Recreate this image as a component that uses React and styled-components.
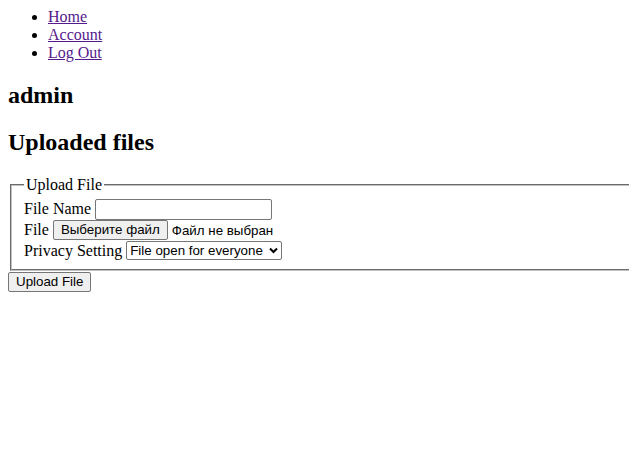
import React from 'react';
import styled, { createGlobalStyle } from 'styled-components';

const GlobalStyle = createGlobalStyle`
  html {
    overflow-x: clip;
  }
  body {
    margin: 8px;
    font-family: "Liberation Serif", "Times New Roman", serif;
    font-size: 16px;
    color: #000;
    background: #fff;
  }
`;

const NavList = styled.ul`
  margin: 0 0 16px;
  padding-left: 40px;
  list-style: disc;
`;

const NavLink = styled.a`
  color: #551a8b;
  text-decoration: underline;
`;

const Heading = styled.h2`
  font-size: 24px;
  margin: 19.92px 0;
`;

const FieldSet = styled.fieldset`
  margin: 0 -16px 0 2px;
  padding: 0.3em 0.75em 8px;
  border: 2px groove #c0c0c0;
`;

const Legend = styled.legend`
  padding: 0 2px;
`;

const Row = styled.div`
  display: flex;
  align-items: center;
  gap: 4px;
  height: ${(p) => p.$h || 21}px;
`;

const TextInput = styled.input`
  width: 177px;
  height: 21px;
  box-sizing: border-box;
  padding: 1px 2px;
  border: 1px solid #767676;
  border-radius: 2px;
  font-family: "Liberation Sans", Arial, sans-serif;
  font-size: 13.33px;
`;

const Button = styled.button`
  height: 20px;
  box-sizing: border-box;
  padding: 1px 7px;
  border: 1px solid #767676;
  border-radius: 2px;
  background: #efefef;
  color: #000;
  font-family: "Liberation Sans", Arial, sans-serif;
  font-size: 13.33px;
  line-height: 16px;
`;

const FileNote = styled.span`
  font-family: "Liberation Sans", Arial, sans-serif;
  font-size: 13.33px;
`;

const SelectWrap = styled.span`
  position: relative;
  display: inline-flex;
`;

const Select = styled.select`
  appearance: none;
  height: 19px;
  box-sizing: border-box;
  padding: 0 18px 0 3px;
  border: 1px solid #767676;
  border-radius: 2px;
  background: #fff;
  color: #000;
  font-family: "Liberation Sans", Arial, sans-serif;
  font-size: 13.33px;
`;

const Chevron = styled.svg`
  position: absolute;
  right: 4px;
  top: 6px;
  pointer-events: none;
`;

const SubmitButton = styled(Button)`
  display: block;
  margin-top: 1px;
`;

export default function App() {
  return (
    <>
      <GlobalStyle />
      <NavList>
        <li><NavLink href="#">Home</NavLink></li>
        <li><NavLink href="#">Account</NavLink></li>
        <li><NavLink href="#">Log Out</NavLink></li>
      </NavList>
      <Heading>admin</Heading>
      <Heading>Uploaded files</Heading>
      <form onSubmit={(e) => e.preventDefault()}>
        <FieldSet>
          <Legend>Upload File</Legend>
          <Row>
            File Name <TextInput type="text" />
          </Row>
          <Row>
            File <Button type="button">Выберите файл</Button>
            <FileNote>Файл не выбран</FileNote>
          </Row>
          <Row $h={20}>
            Privacy Setting
            <SelectWrap>
              <Select defaultValue="public">
                <option value="public">File open for everyone</option>
                <option value="private">Private file</option>
              </Select>
              <Chevron width="9" height="7" viewBox="0 0 9 7">
                <path d="M1 1.5 L4.5 5 L8 1.5" fill="none" stroke="#000" strokeWidth="2" />
              </Chevron>
            </SelectWrap>
          </Row>
        </FieldSet>
        <SubmitButton type="submit">Upload File</SubmitButton>
      </form>
    </>
  );
}
